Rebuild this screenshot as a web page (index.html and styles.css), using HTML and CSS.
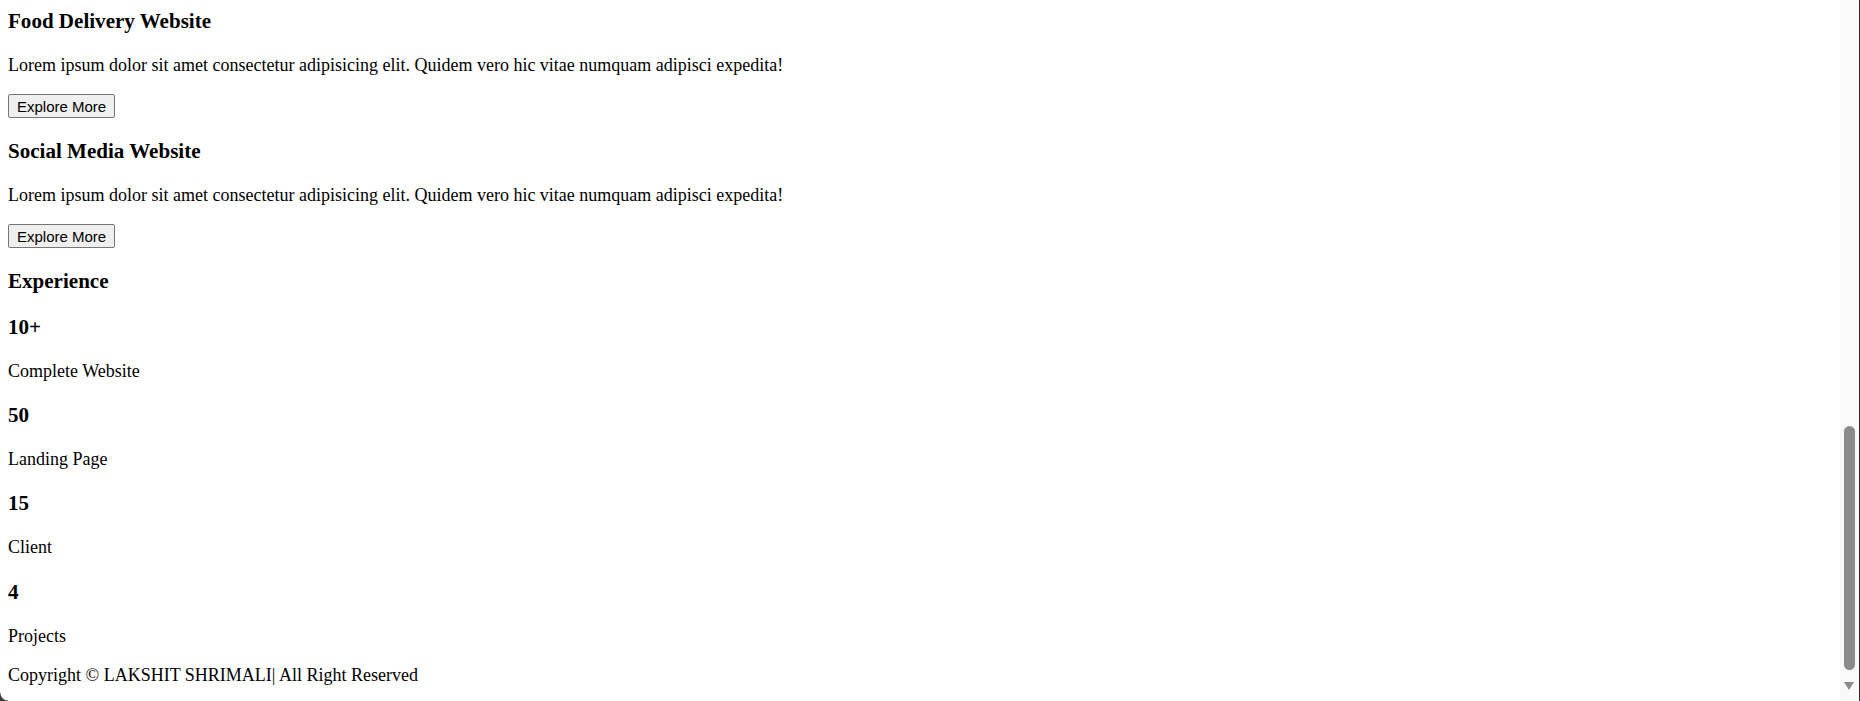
FILE: index.html
```html
<!DOCTYPE html>
<html lang="en">
<head>
<meta charset="utf-8">
<title>Portfolio</title>
<link rel="stylesheet" href="styles.css">
</head>
<body>
<main class="page">
  <section class="project first">
    <h3 class="title">Food Delivery Website</h3>
    <p class="text">Lorem ipsum dolor sit amet consectetur adipisicing elit. Quidem vero hic vitae numquam adipisci expedita!</p>
    <div class="actions"><button class="btn">Explore More</button></div>
  </section>
  <section class="project">
    <h3 class="title">Social Media Website</h3>
    <p class="text">Lorem ipsum dolor sit amet consectetur adipisicing elit. Quidem vero hic vitae numquam adipisci expedita!</p>
    <div class="actions"><button class="btn">Explore More</button></div>
  </section>
  <section class="experience">
    <h3 class="title">Experience</h3>
    <div class="stat"><h3 class="title">10+</h3><p class="text">Complete Website</p></div>
    <div class="stat"><h3 class="title">50</h3><p class="text">Landing Page</p></div>
    <div class="stat"><h3 class="title">15</h3><p class="text">Client</p></div>
    <div class="stat"><h3 class="title">4</h3><p class="text">Projects</p></div>
  </section>
  <footer class="footer"><p class="text">Copyright © LAKSHIT SHRIMALI| All Right Reserved</p></footer>
</main>
<div class="scrollbar" aria-hidden="true">
  <div class="thumb"></div>
  <div class="arrow"></div>
</div>
<div class="corner" aria-hidden="true"></div>
</body>
</html>
```

FILE: styles.css
```css
html, body {
  margin: 0;
  padding: 0;
  background: #ffffff;
  overflow: hidden;
}
body {
  font-family: "Liberation Serif", "Times New Roman", serif;
  font-size: 18px;
  color: #000;
}
.page {
  padding: 0 8px;
}
.title {
  font-size: 21.06px;
  font-weight: bold;
  margin: 21.06px 0;
}
.first .title {
  margin-top: 9px;
}
.text {
  margin: 18px 0;
}
.actions {
  line-height: normal;
}
.btn {
  font-family: "Liberation Sans", Arial, sans-serif;
  font-size: 15px;
  padding: 3px 8px 2px;
  border: 1px solid #767676;
  border-radius: 2px;
  background: #efefef;
  color: #000;
}
.scrollbar {
  position: fixed;
  top: 0;
  right: 0;
  width: 19px;
  height: 100%;
  background: #f9f9f9;
  border-right: 1px solid #2b2b2b;
}
.thumb {
  position: absolute;
  left: 4px;
  top: 426px;
  width: 11px;
  height: 244px;
  border-radius: 6px;
  background: #8b8b8b;
}
.arrow {
  position: absolute;
  left: 4px;
  top: 682px;
  width: 0;
  height: 0;
  border-left: 5.5px solid transparent;
  border-right: 5.5px solid transparent;
  border-top: 8px solid #8b8b8b;
}
.corner {
  position: fixed;
  left: 0;
  bottom: 0;
  width: 8px;
  height: 8px;
  background: radial-gradient(circle at 100% 0, transparent 7px, #3a3a3a 8px);
}
```
